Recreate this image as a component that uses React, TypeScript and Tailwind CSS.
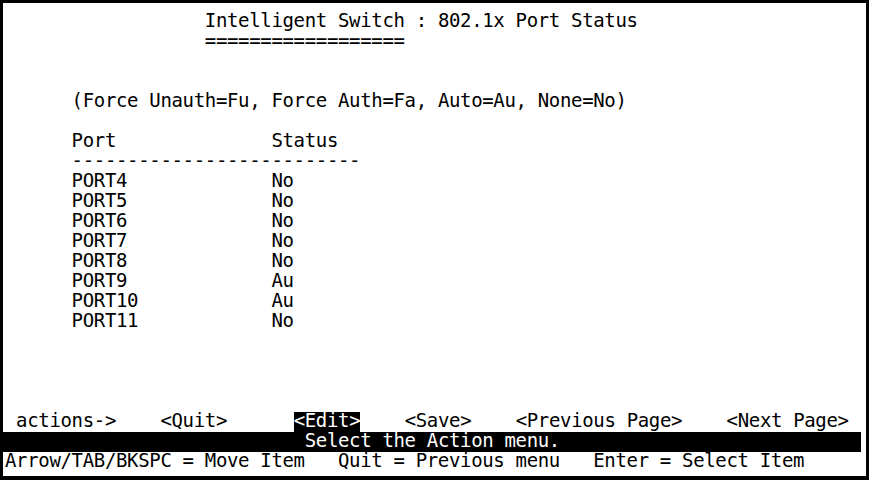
type Seg = { col: number; text: string; inv?: boolean };

const ports: [string, string][] = [
  ['PORT4', 'No'],
  ['PORT5', 'No'],
  ['PORT6', 'No'],
  ['PORT7', 'No'],
  ['PORT8', 'No'],
  ['PORT9', 'Au'],
  ['PORT10', 'Au'],
  ['PORT11', 'No'],
];

const rows: Seg[][] = [
  [{ col: 18, text: 'Intelligent Switch : 802.1x Port Status' }],
  [{ col: 18, text: '==================' }],
  [],
  [],
  [{ col: 6, text: '(Force Unauth=Fu, Force Auth=Fa, Auto=Au, None=No)' }],
  [],
  [
    { col: 6, text: 'Port' },
    { col: 24, text: 'Status' },
  ],
  [{ col: 6, text: '--------------------------' }],
  ...ports.map(([p, s]) => [
    { col: 6, text: p },
    { col: 24, text: s },
  ]),
  [],
  [],
  [],
  [],
  [
    { col: 1, text: 'actions->' },
    { col: 14, text: '<Quit>' },
    { col: 26, text: '<Edit>', inv: true },
    { col: 36, text: '<Save>' },
    { col: 46, text: '<Previous Page>' },
    { col: 65, text: '<Next Page>' },
  ],
];

// lay segments out on the character grid by padding with spaces
function Line({ segs }: { segs: Seg[] }) {
  let pos = 0;
  const out: { text: string; inv?: boolean }[] = [];
  for (const s of segs) {
    if (s.col > pos) out.push({ text: ' '.repeat(s.col - pos) });
    out.push({ text: s.text, inv: s.inv });
    pos = s.col + s.text.length;
  }
  return (
    <div className="flex h-[20px] whitespace-pre">
      {out.map((o, i) => (
        <span key={i} className={o.inv ? 'bg-black text-white' : ''}>
          {o.text}
        </span>
      ))}
    </div>
  );
}

export default function App() {
  return (
    <div className="w-[869px] h-[480px] overflow-hidden bg-white border-[3px] border-b-[4px] border-black text-black font-['DejaVu_Sans_Mono',monospace] text-[19px] leading-[17px] tracking-[-0.34px]">
      <div className="pt-[9px] pl-[2px]">
        {rows.map((r, i) => (
          <Line key={i} segs={r} />
        ))}
      </div>
      <div className="-mt-0 flex h-[20px] w-[858px] bg-black text-white whitespace-pre pl-[2px]">
        <span>{' '.repeat(27)}Select the Action menu.</span>
      </div>
      <div className="flex h-[20px] whitespace-pre pl-[2px]">
        <span>Arrow/TAB/BKSPC = Move Item   Quit = Previous menu   Enter = Select Item</span>
      </div>
    </div>
  );
}
